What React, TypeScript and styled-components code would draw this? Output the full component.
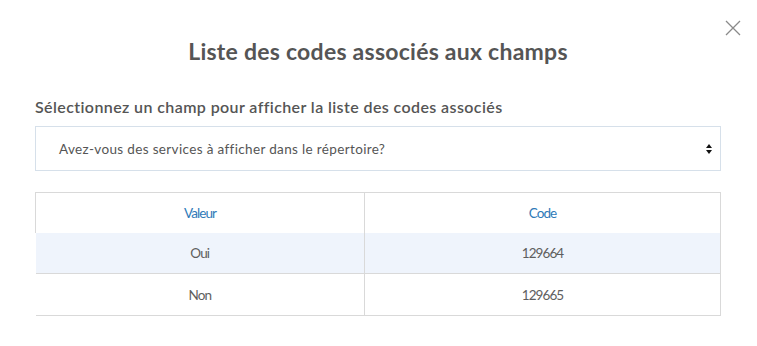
import styled, { createGlobalStyle } from 'styled-components';

const GlobalStyle = createGlobalStyle`
  body {
    margin: 0;
    background: #fff;
    font-family: Lato, "Open Sans", sans-serif;
  }
`;

const Modal = styled.div`
  position: relative;
  width: 757px;
  height: 346px;
  box-sizing: border-box;
  padding: 37px 36px 0 35px;
  background: #fff;
`;

const CloseButton = styled.button`
  position: absolute;
  top: 19px;
  right: 15px;
  width: 18px;
  height: 18px;
  padding: 0;
  border: none;
  background: transparent;
  cursor: pointer;
`;

const Title = styled.h1`
  margin: 0 0 32px;
  text-align: center;
  font-size: 23px;
  line-height: 28px;
  font-weight: 700;
  letter-spacing: 0.25px;
  color: #555;
`;

const Label = styled.label`
  display: block;
  margin-bottom: 9px;
  font-size: 16px;
  line-height: 20px;
  font-weight: 600;
  letter-spacing: 0.4px;
  color: #555;
`;

const SelectBox = styled.div`
  display: flex;
  align-items: center;
  justify-content: space-between;
  height: 45px;
  box-sizing: border-box;
  padding: 0 7px 0 23px;
  border: 1px solid #d6e0ea;
  font-size: 13.5px;
  letter-spacing: 0.35px;
  color: #555;
`;

const Table = styled.table`
  width: 100%;
  margin-top: 21px;
  border-collapse: collapse;
  font-size: 13.5px;
  letter-spacing: -0.9px;
`;

const HeadCell = styled.th<{ $width?: number }>`
  width: ${p => (p.$width ? `${p.$width}px` : 'auto')};
  height: 40px;
  padding: 0;
  border: 1px solid #d9d9d9;
  border-bottom: none;
  font-weight: 400;
  color: #2f7ab8;
`;

const Row = styled.tr<{ $shaded?: boolean }>`
  background: ${p => (p.$shaded ? '#eff4fc' : '#fff')};
`;

const Cell = styled.td`
  height: 40px;
  padding: 0;
  text-align: center;
  color: #5e5e5e;
  border-bottom: 1px solid #d9d9d9;
  border-right: 1px solid #d9d9d9;

  tr:last-child > & {
    height: 41px;
  }
`;

const rows = [
  { value: 'Oui', code: '129664' },
  { value: 'Non', code: '129665' },
];

function App() {
  return (
    <Modal>
      <GlobalStyle />
      <CloseButton aria-label="Fermer">
        <svg width="18" height="18" viewBox="0 0 18 18">
          <path d="M2 2 L16 16 M16 2 L2 16" stroke="#8a8a8a" strokeWidth="1.3" />
        </svg>
      </CloseButton>
      <Title>Liste des codes associés aux champs</Title>
      <Label>Sélectionnez un champ pour afficher la liste des codes associés</Label>
      <SelectBox>
        <span>Avez-vous des services à afficher dans le répertoire?</span>
        <svg width="8" height="12" viewBox="0 0 8 12">
          <path d="M4 1 L7 5 L1 5 Z M1 7 L7 7 L4 11 Z" fill="#111" />
        </svg>
      </SelectBox>
      <Table>
        <thead>
          <tr>
            <HeadCell $width={328}>Valeur</HeadCell>
            <HeadCell>Code</HeadCell>
          </tr>
        </thead>
        <tbody>
          {rows.map((r, i) => (
            <Row key={r.code} $shaded={i === 0}>
              <Cell>{r.value}</Cell>
              <Cell>{r.code}</Cell>
            </Row>
          ))}
        </tbody>
      </Table>
    </Modal>
  );
}

export default App;
